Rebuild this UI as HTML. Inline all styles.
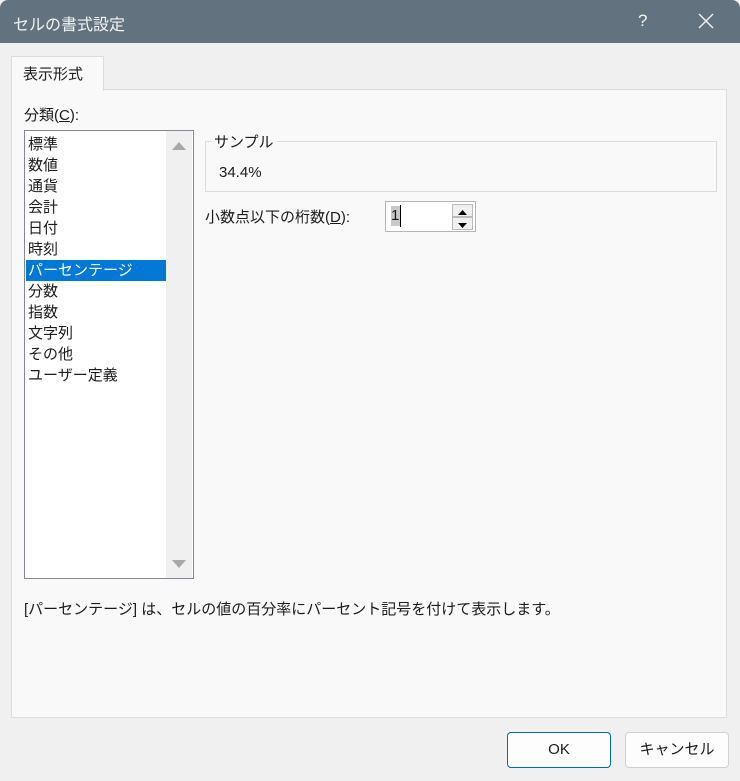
<!DOCTYPE html>
<html><head><meta charset="utf-8"><style>
*{margin:0;padding:0;box-sizing:border-box}
body{width:740px;height:781px;background:#f0f0f0;font-family:"Liberation Sans","Noto Sans CJK JP",sans-serif;font-size:15px;color:#1a1a1a;position:relative;overflow:hidden}
.abs{position:absolute}
#title{left:0;top:0;width:740px;height:43px;background:#62737f;color:#f2f4f5;border-radius:8px 8px 0 0}
#panel{left:11px;top:89px;width:716px;height:629px;background:#f9f9f9;border:1px solid #dcdcdc}
#tab{left:11px;top:56px;width:93px;height:35px;background:#f9f9f9;border:1px solid #dcdcdc;border-bottom:none;padding:6px 0 0 11px}
#list{left:24px;top:130px;width:170px;height:449px;background:#fff;border:1px solid #828790}
.it{position:absolute;left:3px;height:21px;line-height:21px;width:139px}
.sel{background:#0078d7;color:#fff;left:1px;padding-left:2px;width:141px}
#sb{left:166px;top:131px;width:26px;height:447px;background:#f0f0f0}
.btn{height:36px;border:1px solid #d0d0d0;border-radius:4px;background:#fdfdfd;text-align:center;line-height:34px}
</style></head><body>
<div class="abs" id="title"><span class="abs" style="left:13px;top:11px;font-size:16px">セルの書式設定</span>
<span class="abs" style="left:638px;top:11px;font-size:17px">?</span>
<svg class="abs" style="left:698px;top:13px" width="16" height="16"><path d="M1 1L15 15M15 1L1 15" stroke="#f2f4f5" stroke-width="1.4"/></svg></div>
<div class="abs" id="panel"></div>
<div class="abs" id="tab">表示形式</div>
<div class="abs" style="left:24px;top:104px">分類(<u>C</u>):</div>
<div class="abs" id="list">
<div class="it" style="top:3px">標準</div><div class="it" style="top:24px">数値</div><div class="it" style="top:45px">通貨</div><div class="it" style="top:66px">会計</div><div class="it" style="top:87px">日付</div><div class="it" style="top:108px">時刻</div><div class="it sel" style="top:129px">パーセンテージ</div><div class="it" style="top:150px">分数</div><div class="it" style="top:171px">指数</div><div class="it" style="top:192px">文字列</div><div class="it" style="top:213px">その他</div><div class="it" style="top:234px">ユーザー定義</div>
</div>
<div class="abs" id="sb"><svg class="abs" style="left:6px;top:10px" width="14" height="10"><path d="M0 9L7 1L14 9Z" fill="#a8a8a8"/></svg><svg class="abs" style="left:6px;top:428px" width="14" height="10"><path d="M0 1L7 9L14 1Z" fill="#a8a8a8"/></svg></div>
<div class="abs" style="left:205px;top:141px;width:512px;height:51px;border:1px solid #dcdcdc"></div>
<div class="abs" style="left:212px;top:131px;background:#f9f9f9;padding:0 2px">サンプル</div>
<div class="abs" style="left:219px;top:164px">34.4%</div>
<div class="abs" style="left:205px;top:206px">小数点以下の桁数(<u>D</u>):</div>
<div class="abs" style="left:385px;top:201px;width:91px;height:31px;border:1px solid #b5b5b5;background:#fff">
<span class="abs" style="left:5px;top:4px;background:#c8c8c8;width:9px;height:20px;line-height:20px">1</span><span class="abs" style="left:14px;top:3px;width:1px;height:22px;background:#000"></span>
<div class="abs" style="left:66px;top:2px;width:21px;height:13px;background:#f0f0f0;border:1px solid #bbb"><svg width="19" height="11"><path d="M5 8L9.5 3L14 8Z" fill="#000"/></svg></div>
<div class="abs" style="left:66px;top:15px;width:21px;height:13px;background:#f0f0f0;border:1px solid #bbb"><svg width="19" height="11"><path d="M5 3L9.5 8L14 3Z" fill="#000"/></svg></div></div>
<div class="abs" style="left:24px;top:598px">[パーセンテージ] は、セルの値の百分率にパーセント記号を付けて表示します。</div>
<div class="abs btn" style="left:507px;top:732px;width:104px;border:1px solid #0067c0">OK</div>
<div class="abs btn" style="left:625px;top:732px;width:104px">キャンセル</div>
</body></html>
